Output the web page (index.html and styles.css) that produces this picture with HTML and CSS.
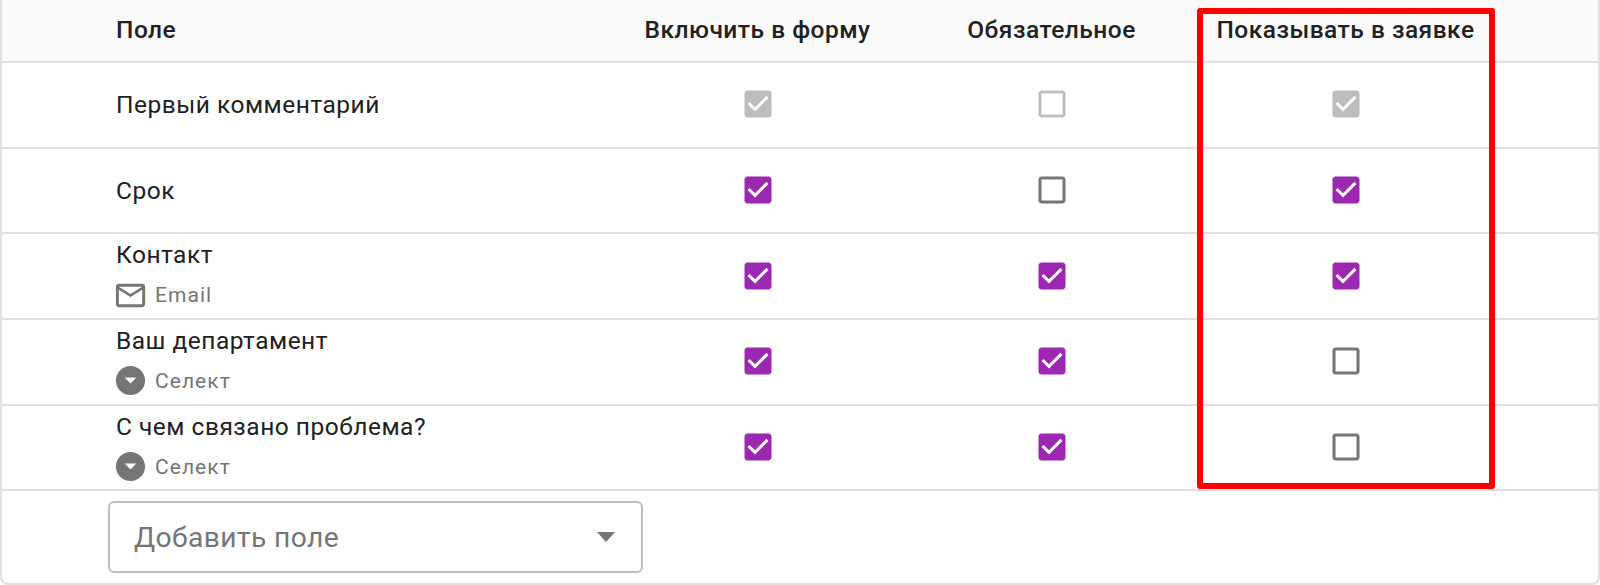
FILE: index.html
```html
<!DOCTYPE html>
<html lang="ru">
<head>
<meta charset="utf-8">
<title>Поля формы</title>
<link rel="stylesheet" href="styles.css">
</head>
<body>
<svg class="defs" aria-hidden="true">
  <symbol id="on" viewBox="0 0 24 24"><path d="M19 3H5c-1.11 0-2 .9-2 2v14c0 1.1.89 2 2 2h14c1.11 0 2-.9 2-2V5c0-1.1-.89-2-2-2zm-9 14l-5-5 1.41-1.41L10 14.17l7.59-7.59L19 8l-9 9z"/></symbol>
  <symbol id="off" viewBox="0 0 24 24"><path d="M19 5v14H5V5h14m0-2H5c-1.1 0-2 .9-2 2v14c0 1.1.9 2 2 2h14c1.1 0 2-.9 2-2V5c0-1.1-.9-2-2-2z"/></symbol>
  <symbol id="mail" viewBox="0 0 24 24"><path d="M20 4H4c-1.1 0-1.99.9-1.99 2L2 18c0 1.1.9 2 2 2h16c1.1 0 2-.9 2-2V6c0-1.1-.9-2-2-2zm0 14H4V8l8 5 8-5v10zm-8-7L4 6h16l-8 5z"/></symbol>
  <symbol id="drop" viewBox="0 0 24 24"><path d="M12 2C6.48 2 2 6.48 2 12s4.48 10 10 10 10-4.48 10-10S17.52 2 12 2zm0 12l-4-4h8l-4 4z"/></symbol>
</svg>
<main class="card">
  <div class="row head">
    <div class="name">Поле</div>
    <div class="cell">Включить в форму</div>
    <div class="cell">Обязательное</div>
    <div class="cell">Показывать в заявке</div>
  </div>

  <div class="row">
    <div class="name">Первый комментарий</div>
    <div class="cell"><svg class="box disabled"><use href="#on"/></svg></div>
    <div class="cell"><svg class="box disabled"><use href="#off"/></svg></div>
    <div class="cell"><svg class="box disabled"><use href="#on"/></svg></div>
  </div>

  <div class="row">
    <div class="name">Срок</div>
    <div class="cell"><svg class="box checked"><use href="#on"/></svg></div>
    <div class="cell"><svg class="box"><use href="#off"/></svg></div>
    <div class="cell"><svg class="box checked"><use href="#on"/></svg></div>
  </div>

  <div class="row">
    <div class="name">Контакт
      <div class="type"><svg class="type-icon"><use href="#mail"/></svg>Email</div>
    </div>
    <div class="cell"><svg class="box checked"><use href="#on"/></svg></div>
    <div class="cell"><svg class="box checked"><use href="#on"/></svg></div>
    <div class="cell"><svg class="box checked"><use href="#on"/></svg></div>
  </div>

  <div class="row">
    <div class="name">Ваш департамент
      <div class="type"><svg class="type-icon"><use href="#drop"/></svg>Селект</div>
    </div>
    <div class="cell"><svg class="box checked"><use href="#on"/></svg></div>
    <div class="cell"><svg class="box checked"><use href="#on"/></svg></div>
    <div class="cell"><svg class="box"><use href="#off"/></svg></div>
  </div>

  <div class="row">
    <div class="name">С чем связано проблема?
      <div class="type"><svg class="type-icon"><use href="#drop"/></svg>Селект</div>
    </div>
    <div class="cell"><svg class="box checked"><use href="#on"/></svg></div>
    <div class="cell"><svg class="box checked"><use href="#on"/></svg></div>
    <div class="cell"><svg class="box"><use href="#off"/></svg></div>
  </div>

  <div class="foot">
    <div class="select">
      <span>Добавить поле</span>
      <i class="caret"></i>
    </div>
  </div>
</main>
<div class="highlight"></div>
</body>
</html>
```

FILE: styles.css
```css
* { box-sizing: border-box; }

html, body {
  margin: 0;
  height: 585px;
  overflow: hidden;
  background: #fff;
}

body {
  position: relative;
  font-family: Roboto, "Liberation Sans", sans-serif;
  color: #212121;
}

.defs { position: absolute; width: 0; height: 0; }

.card {
  width: 1600px;
  height: 585px;
  border: 2px solid #e0e0e0;
  border-top: 0;
  border-radius: 0 0 8px 8px;
  background: #fff;
}

.row {
  display: grid;
  grid-template-columns: 608.5px 294px 294px 294px 1fr;
  align-items: center;
  height: 85.7px;
  border-bottom: 2px solid #e0e0e0;
  font-size: 24.5px;
  line-height: 38px;
  letter-spacing: 0.5px;
}

.row.head {
  height: 63px;
  padding-bottom: 1px;
  background: #fafafa;
  font-weight: 500;
}

.name { padding-left: 114px; }

.cell {
  display: flex;
  justify-content: center;
  align-items: center;
  white-space: nowrap;
}

.box {
  display: block;
  width: 36px;
  height: 36px;
  margin-bottom: 1px;
  fill: #757575;
}
.box.checked { fill: #9c27b0; }
.box.disabled { fill: #bdbdbd; }

.type {
  display: flex;
  align-items: center;
  height: 42px;
  margin-left: -3px;
  font-size: 21px;
  letter-spacing: 1.05px;
  color: #757575;
}

.type-icon {
  width: 35px;
  height: 35px;
  margin-right: 7px;
  fill: #757575;
}

.foot { padding: 10px 0 0 106px; }

.select {
  display: flex;
  align-items: center;
  justify-content: space-between;
  width: 535px;
  height: 72px;
  padding: 0 26px 0 24px;
  border: 2px solid #bdbdbd;
  border-radius: 6px;
  font-size: 28.2px;
  letter-spacing: 0.4px;
  color: #757575;
}

.caret {
  width: 0;
  height: 0;
  border-left: 9.5px solid transparent;
  border-right: 9.5px solid transparent;
  border-top: 10px solid #757575;
}

.highlight {
  position: absolute;
  left: 1197px;
  top: 8px;
  width: 298px;
  height: 480.5px;
  border: 6.5px solid #f00;
  border-radius: 3px;
}
```
